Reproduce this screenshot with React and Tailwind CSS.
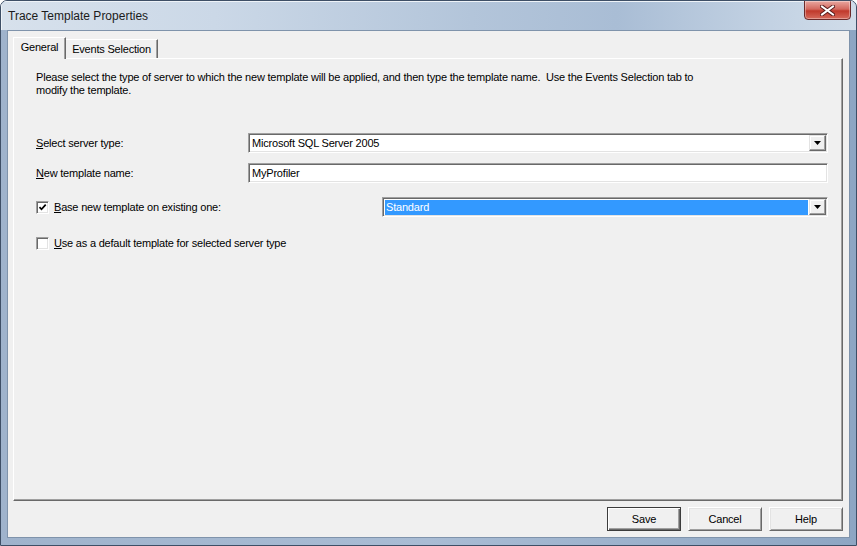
const ui = { fontFamily: '"Liberation Sans", Arial, sans-serif' }

function U({ children }) {
  return <span className="underline underline-offset-[1px]">{children}</span>
}

function DropArrow() {
  return (
    <div className="flex h-full w-[17px] shrink-0 items-center justify-center border border-t-[#e3e3e3] border-l-[#e3e3e3] border-r-[#696969] border-b-[#696969] bg-[#f0f0f0] shadow-[inset_-1px_-1px_0_#a0a0a0,inset_1px_1px_0_#ffffff]">
      <svg width="7" height="4" viewBox="0 0 7 4">
        <path d="M0 0h7L3.5 4z" fill="#000" />
      </svg>
    </div>
  )
}

function Combo({ value, selected, className = '' }) {
  return (
    <div
      className={`flex h-[20px] items-stretch border border-t-[#a0a0a0] border-l-[#a0a0a0] border-r-[#ffffff] border-b-[#ffffff] bg-white p-[1px] shadow-[inset_1px_1px_0_#696969,inset_-1px_-1px_0_#e3e3e3] ${className}`}
    >
      <div className="flex flex-1 items-center pl-[1px] pr-[1px]">
        <span
          className={`flex h-[15px] flex-1 items-center px-[1px] text-[11px] leading-none ${
            selected ? 'bg-[#3399ff] text-white' : 'text-black'
          }`}
        >
          {value}
        </span>
      </div>
      <DropArrow />
    </div>
  )
}

function Checkbox({ checked }) {
  return (
    <div className="flex h-[13px] w-[13px] shrink-0 items-center justify-center border border-t-[#a0a0a0] border-l-[#a0a0a0] border-r-[#ffffff] border-b-[#ffffff] bg-white shadow-[inset_1px_1px_0_#696969,inset_-1px_-1px_0_#e3e3e3]">
      {checked && (
        <svg width="9" height="9" viewBox="0 0 9 9">
          <path d="M1.5 4.2 3.5 6.3 7.7 1.6" fill="none" stroke="#000" strokeWidth="1.7" />
        </svg>
      )}
    </div>
  )
}

function Button({ children, primary }) {
  return (
    <button
      className={`flex h-[24px] w-[74px] items-center justify-center bg-[#f0f0f0] text-[11px] text-black ${
        primary
          ? 'border border-[#3c3c3c] shadow-[inset_1px_1px_0_#ffffff,inset_-1px_-1px_0_#696969,inset_-2px_-2px_0_#a0a0a0]'
          : 'border border-t-[#ffffff] border-l-[#ffffff] border-r-[#696969] border-b-[#696969] shadow-[inset_1px_1px_0_#e3e3e3,inset_-1px_-1px_0_#a0a0a0]'
      }`}
    >
      {children}
    </button>
  )
}

export default function App() {
  return (
    <div
      className="flex h-[546px] w-[857px] flex-col overflow-hidden rounded-t-[7px] border border-[#3e4f66] bg-[linear-gradient(90deg,#9fb3cc_0%,#a9bcd4_50%,#8ea6c3_100%)] tracking-[-0.2px]"
      style={ui}
    >
      {/* title bar */}
      <div className="relative flex h-[29px] shrink-0 items-center bg-[linear-gradient(90deg,#d7e1ec_0%,#cbd8e7_25%,#b3c5da_55%,#a9bdd5_72%,#c3d2e3_90%,#d0dce9_100%)] pl-[7px] shadow-[inset_1px_1px_0_#eef3f8]">
        <span className="text-[12px] tracking-normal text-[#1b1b1b]">Trace Template Properties</span>
        <div className="absolute right-[5px] top-[-1px] flex h-[20px] w-[47px] items-center justify-center rounded-b-[4px] border border-[#6b2a2a] bg-[linear-gradient(180deg,#e9a7a0_0%,#d3695f_45%,#c0392b_55%,#d66a5c_100%)] shadow-[inset_0_0_0_1px_rgba(255,255,255,0.35)]">
          <svg width="15" height="11" viewBox="0 0 15 11">
            <path d="M2 1.5 13 9.5M13 1.5 2 9.5" stroke="#5a1d1d" strokeWidth="4" strokeLinecap="square" />
            <path d="M2 1.5 13 9.5M13 1.5 2 9.5" stroke="#ffffff" strokeWidth="2" strokeLinecap="square" />
          </svg>
        </div>
      </div>

      {/* client area */}
      <div className="mx-[6px] mb-[7px] flex flex-1 flex-col border border-[#7f93ab] bg-[#f0f0f0] pb-[6px] pl-[5px] pr-[6px] pt-[6px]">
        {/* tabs */}
        <div className="relative z-10 flex h-[21px] items-end">
          <div className="mb-[-1px] flex h-[22px] w-[53px] items-center justify-center border-l border-t border-r border-l-white border-t-white border-r-[#696969] bg-[#f0f0f0] pb-[2px] text-[11px] shadow-[inset_-1px_0_0_#a0a0a0]">
            General
          </div>
          <div className="flex h-[19px] w-[92px] items-center justify-center border-t border-r border-t-white border-r-[#696969] text-[11px] shadow-[inset_-1px_0_0_#a0a0a0]">
            Events Selection
          </div>
        </div>

        {/* panel */}
        <div className="flex h-[443px] flex-col border border-t-white border-l-white border-r-[#696969] border-b-[#696969] pl-[22px] pr-[14px] pt-[12px] shadow-[inset_-1px_-1px_0_#a0a0a0]">
          <p className="text-[11px] leading-[13px] text-black">
            Please select the type of server to which the new template will be applied, and then type the template name.&nbsp; Use the Events Selection tab to
            <br />
            modify the template.
          </p>

          <div className="mt-[36px] flex items-center">
            <span className="w-[212px] shrink-0 text-[11px]">
              <U>S</U>elect server type:
            </span>
            <Combo value="Microsoft SQL Server 2005" className="flex-1" />
          </div>

          <div className="mt-[10px] flex items-center">
            <span className="w-[212px] shrink-0 text-[11px]">
              <U>N</U>ew template name:
            </span>
            <div className="flex h-[20px] flex-1 items-center border border-t-[#a0a0a0] border-l-[#a0a0a0] border-r-[#ffffff] border-b-[#ffffff] bg-white pl-[3px] text-[11px] shadow-[inset_1px_1px_0_#696969,inset_-1px_-1px_0_#e3e3e3]">
              MyProfiler
            </div>
          </div>

          <div className="mt-[14px] flex items-center">
            <div className="flex w-[346px] shrink-0 items-center gap-[5px]">
              <Checkbox checked />
              <span className="text-[11px]">
                <U>B</U>ase new template on existing one:
              </span>
            </div>
            <Combo value="Standard" selected className="flex-1" />
          </div>

          <div className="mt-[18px] flex items-center gap-[5px]">
            <Checkbox />
            <span className="text-[11px]">
              <U>U</U>se as a default template for selected server type
            </span>
          </div>
        </div>

        {/* buttons */}
        <div className="mt-[6px] flex justify-end gap-[7px]">
          <Button primary>Save</Button>
          <Button>Cancel</Button>
          <Button>Help</Button>
        </div>
      </div>
    </div>
  )
}
